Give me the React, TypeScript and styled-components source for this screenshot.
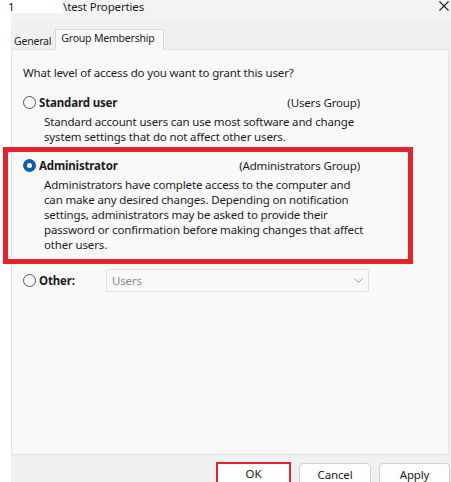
import * as React from "react";
import styled, { createGlobalStyle, css } from "styled-components";

const GlobalStyle = createGlobalStyle`
  html, body {
    margin: 0;
    padding: 0;
    background: #ffffff;
  }
  body {
    font-family: "Noto Sans", "Open Sans", sans-serif;
    font-size: 11.5px;
    letter-spacing: -0.15px;
    color: #1c1c1c;
  }
`;

export default function App() {
  return (
    <Page>
      <GlobalStyle />
      <Window>
        <TitleBar>
          <Redacted>1</Redacted>
          <TitleText>\test Properties</TitleText>
          <CloseButton>
            <svg width="10" height="10" viewBox="0 0 10 10">
              <path d="M0.5 0.5 L9.5 9.5 M9.5 0.5 L0.5 9.5" stroke="#1f1f1f" strokeWidth="1.1" />
            </svg>
          </CloseButton>
        </TitleBar>

        <TabStrip>
          <Tab>General</Tab>
          <Tab $active>Group Membership</Tab>
        </TabStrip>

        <Panel>
          <Question>What level of access do you want to grant this user?</Question>

          <Option>
            <OptionHead>
              <RadioLabel>
                <Radio />
                <Strong>Standard user</Strong>
              </RadioLabel>
              <Group>(Users Group)</Group>
            </OptionHead>
            <Description>
              Standard account users can use most software and change<br />
              system settings that do not affect other users.
            </Description>
          </Option>

          <Option $highlighted>
            <OptionHead>
              <RadioLabel>
                <Radio $checked />
                <Strong>Administrator</Strong>
              </RadioLabel>
              <Group>(Administrators Group)</Group>
            </OptionHead>
            <Description>
              Administrators have complete access to the computer and<br />
              can make any desired changes. Depending on notification<br />
              settings, administrators may be asked to provide their<br />
              password or confirmation before making changes that affect<br />
              other users.
            </Description>
          </Option>

          <OtherRow>
            <RadioLabel>
              <Radio />
              <OtherLabel>Other:</OtherLabel>
            </RadioLabel>
            <Select>
              <span>Users</span>
              <svg width="9" height="5" viewBox="0 0 9 5">
                <path d="M0.5 0.5 L4.5 4.5 L8.5 0.5" fill="none" stroke="#a0a0a0" strokeWidth="1" />
              </svg>
            </Select>
          </OtherRow>
        </Panel>

        <Footer>
          <Button $width={75} $highlighted>OK</Button>
          <Button $width={72}>Cancel</Button>
          <Button $width={71}>Apply</Button>
        </Footer>
      </Window>
    </Page>
  );
}

const Page = styled.div`
  width: 451px;
  height: 482px;
  overflow: hidden;
  background: #ffffff;
`;

const Window = styled.div`
  margin-left: 11px;
  height: 482px;
  background: #f0f0f0;
  display: flex;
  flex-direction: column;
`;

const TitleBar = styled.div`
  flex-shrink: 0;
  margin-left: -11px;
  height: 22px;
  display: flex;
  align-items: flex-start;
  background: linear-gradient(to right, #ffffff 11px, #f3f3f3 11px);
`;

const Redacted = styled.div`
  width: 62px;
  height: 13px;
  box-sizing: border-box;
  padding-left: 8px;
  background: #ffffff;
  line-height: 14px;
`;

const TitleText = styled.div`
  line-height: 14px;
  padding-left: 1px;
`;

const CloseButton = styled.div`
  margin-left: auto;
  padding: 1px 2px 0 0;
  display: flex;
`;

const TabStrip = styled.div`
  flex-shrink: 0;
  height: 27px;
  display: flex;
  align-items: flex-end;
  position: relative;
  z-index: 1;
  font-size: 10.5px;
  letter-spacing: -0.2px;
`;

const Tab = styled.div<{ $active?: boolean }>`
  box-sizing: border-box;
  height: 18px;
  padding: 2px 4px 0 3px;
  line-height: 16px;
  white-space: nowrap;

  ${(p) =>
    p.$active &&
    css`
      height: 21px;
      margin-bottom: -1px;
      padding: 0 8px 0 5px;
      background: #f9f9f9;
      border: 1px solid #dadada;
      border-bottom: none;
      line-height: 17px;
    `}
`;

const Panel = styled.div`
  flex-shrink: 0;
  box-sizing: border-box;
  width: 438px;
  height: 406px;
  padding: 15px 0 0 11px;
  background: #f9f9f9;
  border: 1px solid #e2e2e2;
`;

const Question = styled.p`
  margin: 0;
  line-height: 15px;
`;

const Option = styled.div<{ $highlighted?: boolean }>`
  box-sizing: border-box;
  width: 337px;
  margin-top: 15px;

  ${(p) =>
    p.$highlighted &&
    css`
      width: 410px;
      margin: 3px 0 0 -20px;
      padding: 6px 48px 7px 15px;
      border: 5px solid #e8212b;
    `}
`;

const OptionHead = styled.div`
  display: flex;
  justify-content: space-between;
  align-items: center;
  line-height: 15px;
`;

const RadioLabel = styled.div`
  display: flex;
  align-items: center;
  gap: 3px;
`;

const Radio = styled.span<{ $checked?: boolean }>`
  box-sizing: border-box;
  width: 13px;
  height: 13px;
  border-radius: 50%;
  border: 1px solid #555555;
  background: #fbfbfb;
  display: flex;
  align-items: center;
  justify-content: center;

  ${(p) =>
    p.$checked &&
    css`
      border: none;
      background: #0a5fb4;
      &::after {
        content: "";
        width: 5px;
        height: 5px;
        border-radius: 50%;
        background: #ffffff;
      }
    `}
`;

const Strong = styled.span`
  font-weight: 700;
`;

const Group = styled.span``;

const Description = styled.p`
  margin: 4px 0 0 21px;
  line-height: 15px;
  white-space: nowrap;
`;

const OtherRow = styled.div`
  margin-top: 5px;
  height: 23px;
  display: flex;
  align-items: center;
`;

const OtherLabel = styled.span`
  width: 67px;
  font-weight: 700;
`;

const Select = styled.div`
  box-sizing: border-box;
  width: 263px;
  height: 23px;
  padding: 0 5px;
  display: flex;
  align-items: center;
  justify-content: space-between;
  background: #f9f9f9;
  border: 1px solid #e0e0e0;
  border-radius: 2px;
  color: #8a8a8a;
`;

const Footer = styled.div`
  flex: 1;
  min-height: 0;
  overflow: hidden;
  padding: 8px 1px 0 0;
  display: flex;
  justify-content: flex-end;
  align-items: flex-start;
  gap: 8px;
`;

const Button = styled.div<{ $width: number; $highlighted?: boolean }>`
  box-sizing: border-box;
  width: ${(p) => p.$width}px;
  height: 23px;
  flex-shrink: 0;
  display: flex;
  align-items: center;
  justify-content: center;
  background: #fdfdfd;
  border: 1px solid #d0d0d0;
  border-radius: 4px;

  ${(p) =>
    p.$highlighted &&
    css`
      margin-top: -1px;
      border: 2px solid #e8212b;
      border-radius: 0;
    `}
`;
